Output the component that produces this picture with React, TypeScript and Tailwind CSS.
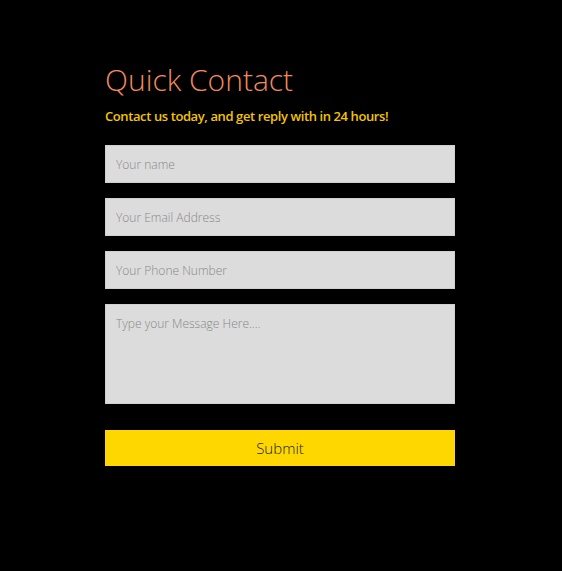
export default function App() {
  const font = { fontFamily: '"Open Sans", "Liberation Sans", sans-serif' };
  const fieldCls =
    'w-full h-[38px] bg-[#dcdcdc] border border-[#d0d0d0] px-[10px] text-[12px] font-light text-[#555] placeholder:text-[#888] outline-none';

  return (
    <div className="min-h-[571px] bg-black" style={font}>
      <div className="w-[350px] ml-[105px] pt-[65px]">
        <h2 className="text-[30px] leading-[30px] font-light text-[#f08a5d]">Quick Contact</h2>
        <p className="mt-[12px] text-[13px] leading-[18px] font-semibold text-[#f5c400] tracking-[-0.4px]">
          Contact us today, and get reply with in 24 hours!
        </p>
        <form className="mt-[20px] flex flex-col gap-[15px]" onSubmit={(e) => e.preventDefault()}>
          <input type="text" placeholder="Your name" className={fieldCls} />
          <input type="email" placeholder="Your Email Address" className={fieldCls} />
          <input type="tel" placeholder="Your Phone Number" className={fieldCls} />
          <textarea
            placeholder="Type your Message Here...."
            className="w-full h-[100px] bg-[#dcdcdc] border border-[#d0d0d0] px-[10px] py-[10px] text-[12px] font-light text-[#555] placeholder:text-[#888] outline-none resize-none"
          />
          <button
            type="submit"
            className="mt-[11px] w-full h-[36px] bg-[#ffd700] text-[15px] font-light text-[#222]"
          >
            Submit
          </button>
        </form>
      </div>
    </div>
  );
}
